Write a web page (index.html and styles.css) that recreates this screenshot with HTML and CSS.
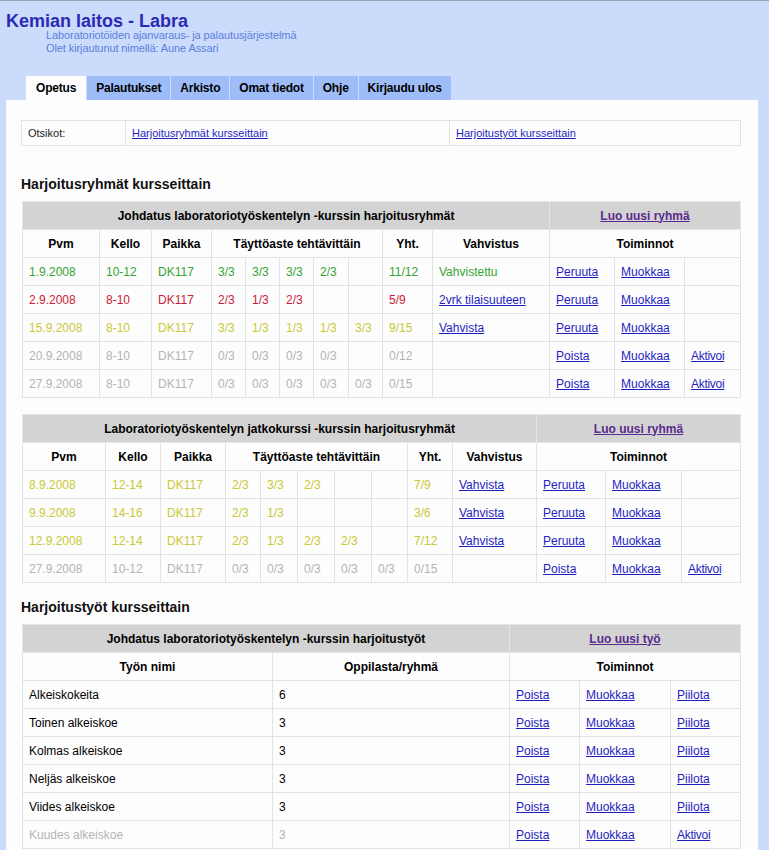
FILE: index.html
```html
<!DOCTYPE html>
<html lang="fi">
<head>
<meta charset="utf-8">
<title>Kemian laitos - Labra</title>
<link rel="stylesheet" href="styles.css">
</head>
<body>
<header class="site-header">
  <h1 class="site-title">Kemian laitos - Labra</h1>
  <div class="site-sub">
    <div>Laboratoriotöiden ajanvaraus- ja palautusjärjestelmä</div>
    <div>Olet kirjautunut nimellä: Aune Assari</div>
  </div>
  <nav class="tabs">
    <span class="tab active">Opetus</span>
    <span class="tab">Palautukset</span>
    <span class="tab">Arkisto</span>
    <span class="tab">Omat tiedot</span>
    <span class="tab">Ohje</span>
    <span class="tab">Kirjaudu ulos</span>
  </nav>
</header>
<main class="panel">
  <table class="toc">
    <colgroup><col class="toc-a"><col class="toc-b"><col></colgroup>
    <tr>
      <td>Otsikot:</td>
      <td><a href="#ryhmat">Harjoitusryhmät kursseittain</a></td>
      <td><a href="#tyot">Harjoitustyöt kursseittain</a></td>
    </tr>
  </table>

  <h2 class="section-title first" id="ryhmat">Harjoitusryhmät kursseittain</h2>

  <table class="grid g1">
    <colgroup>
      <col class="c1"><col class="c2"><col class="c3">
      <col class="c4"><col class="c5"><col class="c6"><col class="c7"><col class="c8">
      <col class="c9"><col class="c10"><col class="c11"><col class="c12"><col>
    </colgroup>
    <tr class="caption-row">
      <th colspan="10">Johdatus laboratoriotyöskentelyn -kurssin harjoitusryhmät</th>
      <th colspan="3"><a class="visited" href="#">Luo uusi ryhmä</a></th>
    </tr>
    <tr class="head-row">
      <th>Pvm</th><th>Kello</th><th>Paikka</th><th colspan="5">Täyttöaste tehtävittäin</th><th>Yht.</th><th>Vahvistus</th><th colspan="3">Toiminnot</th>
    </tr>
    <tr class="green">
      <td>1.9.2008</td><td>10-12</td><td>DK117</td><td>3/3</td><td>3/3</td><td>3/3</td><td>2/3</td><td></td><td>11/12</td><td>Vahvistettu</td><td><a href="#">Peruuta</a></td><td><a href="#">Muokkaa</a></td><td></td>
    </tr>
    <tr class="red">
      <td>2.9.2008</td><td>8-10</td><td>DK117</td><td>2/3</td><td>1/3</td><td>2/3</td><td></td><td></td><td>5/9</td><td><a href="#">2vrk tilaisuuteen</a></td><td><a href="#">Peruuta</a></td><td><a href="#">Muokkaa</a></td><td></td>
    </tr>
    <tr class="yellow">
      <td>15.9.2008</td><td>8-10</td><td>DK117</td><td>3/3</td><td>1/3</td><td>1/3</td><td>1/3</td><td>3/3</td><td>9/15</td><td><a href="#">Vahvista</a></td><td><a href="#">Peruuta</a></td><td><a href="#">Muokkaa</a></td><td></td>
    </tr>
    <tr class="grey">
      <td>20.9.2008</td><td>8-10</td><td>DK117</td><td>0/3</td><td>0/3</td><td>0/3</td><td>0/3</td><td></td><td>0/12</td><td></td><td><a href="#">Poista</a></td><td><a href="#">Muokkaa</a></td><td><a class="narrow" href="#">Aktivoi</a></td>
    </tr>
    <tr class="grey">
      <td>27.9.2008</td><td>8-10</td><td>DK117</td><td>0/3</td><td>0/3</td><td>0/3</td><td>0/3</td><td>0/3</td><td>0/15</td><td></td><td><a href="#">Poista</a></td><td><a href="#">Muokkaa</a></td><td><a class="narrow" href="#">Aktivoi</a></td>
    </tr>
  </table>

  <table class="grid g2">
    <colgroup>
      <col class="c1"><col class="c2"><col class="c3">
      <col class="c4"><col class="c5"><col class="c6"><col class="c7"><col class="c8">
      <col class="c9"><col class="c10"><col class="c11"><col class="c12"><col>
    </colgroup>
    <tr class="caption-row">
      <th colspan="10">Laboratoriotyöskentelyn jatkokurssi -kurssin harjoitusryhmät</th>
      <th colspan="3"><a class="visited" href="#">Luo uusi ryhmä</a></th>
    </tr>
    <tr class="head-row">
      <th>Pvm</th><th>Kello</th><th>Paikka</th><th colspan="5">Täyttöaste tehtävittäin</th><th>Yht.</th><th>Vahvistus</th><th colspan="3">Toiminnot</th>
    </tr>
    <tr class="yellow">
      <td>8.9.2008</td><td>12-14</td><td>DK117</td><td>2/3</td><td>3/3</td><td>2/3</td><td></td><td></td><td>7/9</td><td><a href="#">Vahvista</a></td><td><a href="#">Peruuta</a></td><td><a href="#">Muokkaa</a></td><td></td>
    </tr>
    <tr class="yellow">
      <td>9.9.2008</td><td>14-16</td><td>DK117</td><td>2/3</td><td>1/3</td><td></td><td></td><td></td><td>3/6</td><td><a href="#">Vahvista</a></td><td><a href="#">Peruuta</a></td><td><a href="#">Muokkaa</a></td><td></td>
    </tr>
    <tr class="yellow">
      <td>12.9.2008</td><td>12-14</td><td>DK117</td><td>2/3</td><td>1/3</td><td>2/3</td><td>2/3</td><td></td><td>7/12</td><td><a href="#">Vahvista</a></td><td><a href="#">Peruuta</a></td><td><a href="#">Muokkaa</a></td><td></td>
    </tr>
    <tr class="grey">
      <td>27.9.2008</td><td>10-12</td><td>DK117</td><td>0/3</td><td>0/3</td><td>0/3</td><td>0/3</td><td>0/3</td><td>0/15</td><td></td><td><a href="#">Poista</a></td><td><a href="#">Muokkaa</a></td><td><a class="narrow" href="#">Aktivoi</a></td>
    </tr>
  </table>

  <h2 class="section-title" id="tyot">Harjoitustyöt kursseittain</h2>

  <table class="grid g3">
    <colgroup>
      <col class="c1"><col class="c2"><col class="c3"><col class="c4"><col>
    </colgroup>
    <tr class="caption-row">
      <th colspan="2">Johdatus laboratoriotyöskentelyn -kurssin harjoitustyöt</th>
      <th colspan="3"><a class="visited" href="#">Luo uusi työ</a></th>
    </tr>
    <tr class="head-row">
      <th>Työn nimi</th><th>Oppilasta/ryhmä</th><th colspan="3">Toiminnot</th>
    </tr>
    <tr><td>Alkeiskokeita</td><td>6</td><td><a href="#">Poista</a></td><td><a href="#">Muokkaa</a></td><td><a href="#">Piilota</a></td></tr>
    <tr><td>Toinen alkeiskoe</td><td>3</td><td><a href="#">Poista</a></td><td><a href="#">Muokkaa</a></td><td><a href="#">Piilota</a></td></tr>
    <tr><td>Kolmas alkeiskoe</td><td>3</td><td><a href="#">Poista</a></td><td><a href="#">Muokkaa</a></td><td><a href="#">Piilota</a></td></tr>
    <tr><td>Neljäs alkeiskoe</td><td>3</td><td><a href="#">Poista</a></td><td><a href="#">Muokkaa</a></td><td><a href="#">Piilota</a></td></tr>
    <tr><td>Viides alkeiskoe</td><td>3</td><td><a href="#">Poista</a></td><td><a href="#">Muokkaa</a></td><td><a href="#">Piilota</a></td></tr>
    <tr class="grey"><td>Kuudes alkeiskoe</td><td>3</td><td><a href="#">Poista</a></td><td><a href="#">Muokkaa</a></td><td><a class="narrow" href="#">Aktivoi</a></td></tr>
  </table>
</main>
</body>
</html>
```

FILE: styles.css
```css
html, body {
  margin: 0;
  padding: 0;
}
body {
  background: #cbdbfb;
  font-family: "Liberation Sans", Arial, sans-serif;
  font-size: 12px;
  color: #000;
  height: 850px;
  overflow: hidden;
}
.site-header {
  border-top: 1px solid #9aa4b4;
  padding: 0 6px;
}
.site-title {
  margin: 10px 0 0 0;
  font-size: 18px;
  line-height: 20px;
  font-weight: bold;
  color: #2a2ab4;
}
.site-sub {
  margin: -2px 0 0 40px;
  font-size: 11px;
  line-height: 13px;
  color: #5b7fdc;
  letter-spacing: -0.1px;
}
.tabs {
  display: flex;
  gap: 1px;
  margin: 21px 0 0 20px;
}
.tab {
  display: block;
  height: 24px;
  line-height: 25px;
  padding: 0 9px;
  background: #9ebcf7;
  font-weight: bold;
  font-size: 12px;
  color: #000;
  letter-spacing: -0.2px;
}
.tab.active {
  background: #fdfdfd;
  padding: 0 10px;
}
.panel {
  margin: 0 11px 0 6px;
  background: #fdfdfd;
  padding: 20px 17px 10px 15px;
  min-height: 760px;
}
a {
  color: #1f1fc0;
  text-decoration: underline;
}
a.visited {
  color: #5a2a8c;
}
a.narrow {
  letter-spacing: -0.3px;
}
.toc {
  width: 100%;
  border-collapse: collapse;
  border: 1px solid #dcdcdc;
  table-layout: fixed;
  font-size: 11px;
}
.toc td {
  height: 24px;
  padding: 0 6px;
  border: 1px solid #e2e2e2;
  color: #222;
}
.toc-a { width: 104px; }
.toc-b { width: 324px; }
.section-title {
  font-size: 14px;
  line-height: 17px;
  margin: 16px 0 8px 0;
  color: #111;
}
.section-title.first {
  margin-top: 30px;
}
.grid {
  width: 719px;
  margin-left: 1px;
  border-collapse: collapse;
  table-layout: fixed;
  border: 1px solid #aeaeae;
  background: #fdfdfd;
}
.grid + .grid {
  margin-top: 16px;
}
.grid tr {
  height: 28px;
}
.grid th, .grid td {
  border: 1px solid #dde4e4;
  padding: 0 6px;
  white-space: nowrap;
  overflow: hidden;
}
.grid th {
  font-weight: bold;
  text-align: center;
}
.grid td {
  text-align: left;
}
.grid .caption-row th {
  background: #d3d3d3;
  border-color: #e6e6e6;
}
.grid .head-row th {
  background: #fdfdfd;
}
.green td { color: #33a532; }
.red td { color: #cc1b35; }
.yellow td { color: #c9c936; }
.grey td { color: #b4b4b4; }

.g1 .c1 { width: 77px; }
.g1 .c2 { width: 52px; }
.g1 .c3 { width: 60px; }
.g1 .c4 { width: 34px; }
.g1 .c5 { width: 34px; }
.g1 .c6 { width: 34px; }
.g1 .c7 { width: 35px; }
.g1 .c8 { width: 34px; }
.g1 .c9 { width: 50px; }
.g1 .c10 { width: 117px; }
.g1 .c11 { width: 65px; }
.g1 .c12 { width: 70px; }

.g2 .c1 { width: 83px; }
.g2 .c2 { width: 55px; }
.g2 .c3 { width: 65px; }
.g2 .c4 { width: 35px; }
.g2 .c5 { width: 37px; }
.g2 .c6 { width: 37px; }
.g2 .c7 { width: 37px; }
.g2 .c8 { width: 36px; }
.g2 .c9 { width: 45px; }
.g2 .c10 { width: 84px; }
.g2 .c11 { width: 69px; }
.g2 .c12 { width: 76px; }

.g3 .c1 { width: 250px; }
.g3 .c2 { width: 237px; }
.g3 .c3 { width: 70px; }
.g3 .c4 { width: 91px; }
```
